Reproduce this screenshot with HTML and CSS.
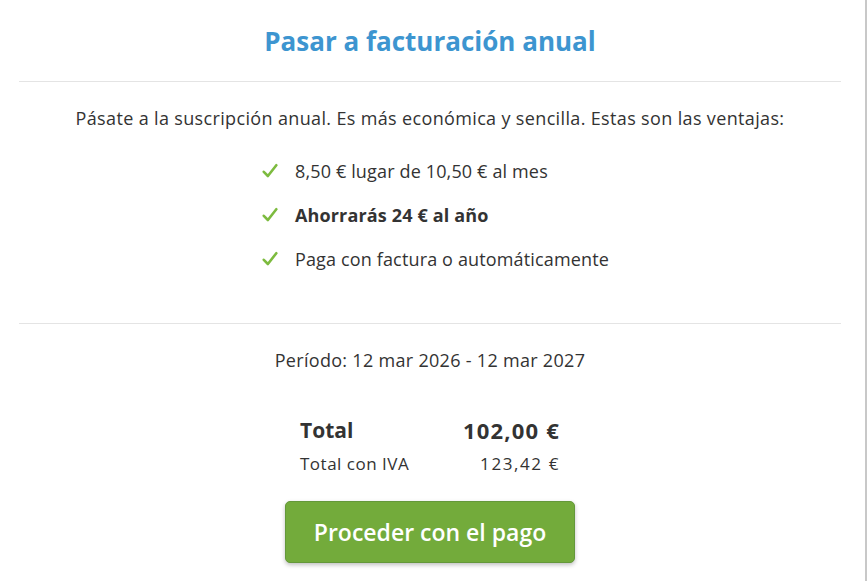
FILE: index.html
```html
<!DOCTYPE html>
<html lang="es">
<head>
  <meta charset="UTF-8">
  <meta name="viewport" content="width=device-width, initial-scale=1.0">
  <title>Pasar a facturación anual</title>
  <link rel="stylesheet" href="styles.css">
</head>
<body>
  <div class="modal">
    <div class="modal-header">
      <h1>Pasar a facturación anual</h1>
    </div>
    <div class="modal-section">
      <p class="intro">Pásate a la suscripción anual. Es más económica y sencilla. Estas son las ventajas:</p>
      <ul class="benefits">
        <li>
          <svg class="check" viewBox="0 0 16 16" width="16" height="16"><path d="M1.8 8.8 L5.9 13 L14.3 2.2" fill="none" stroke="#7dbb3f" stroke-width="2.6" stroke-linecap="round" stroke-linejoin="round"/></svg>
          <span>8,50 € lugar de 10,50 € al mes</span>
        </li>
        <li>
          <svg class="check" viewBox="0 0 16 16" width="16" height="16"><path d="M1.8 8.8 L5.9 13 L14.3 2.2" fill="none" stroke="#7dbb3f" stroke-width="2.6" stroke-linecap="round" stroke-linejoin="round"/></svg>
          <strong>Ahorrarás 24 € al año</strong>
        </li>
        <li>
          <svg class="check" viewBox="0 0 16 16" width="16" height="16"><path d="M1.8 8.8 L5.9 13 L14.3 2.2" fill="none" stroke="#7dbb3f" stroke-width="2.6" stroke-linecap="round" stroke-linejoin="round"/></svg>
          <span>Paga con factura o automáticamente</span>
        </li>
      </ul>
    </div>
    <div class="modal-footer">
      <p class="period">Período: 12 mar 2026 - 12 mar 2027</p>
      <table class="totals">
        <tr class="total-row">
          <td>Total</td>
          <td class="amount">102,00 €</td>
        </tr>
        <tr class="vat-row">
          <td>Total con IVA</td>
          <td class="amount">123,42 €</td>
        </tr>
      </table>
      <button class="pay-btn" type="button">Proceder con el pago</button>
    </div>
  </div>
</body>
</html>
```

FILE: styles.css
```css
html, body {
  margin: 0;
  padding: 0;
  background: #ffffff;
}
body {
  font-family: 'Open Sans', 'Lato', sans-serif;
  color: #333333;
}
.modal {
  box-sizing: border-box;
  width: 867px;
  height: 581px;
  padding: 0 24px 0 19px;
  border-right: 2px solid #c8c8c8;
}
.modal-header {
  height: 81px;
  border-bottom: 1px solid #e4e4e4;
  display: flex;
  align-items: center;
  justify-content: center;
}
h1 {
  margin: 0;
  font-size: 26px;
  font-weight: 700;
  color: #3d95d0;
}
.modal-section {
  height: 241px;
  border-bottom: 1px solid #e4e4e4;
  display: flex;
  flex-direction: column;
  align-items: center;
}
.intro {
  margin: 24px 0 0;
  font-size: 18px;
  line-height: 24px;
  letter-spacing: 0.35px;
}
.benefits {
  list-style: none;
  margin: 19px 0 0 11px;
  padding: 0;
}
.benefits li {
  display: flex;
  align-items: center;
  gap: 17px;
  height: 44px;
  font-size: 18px;
  letter-spacing: 0.15px;
}
.check {
  flex: none;
}
.modal-footer {
  display: flex;
  flex-direction: column;
  align-items: center;
}
.period {
  margin: 24px 0 0;
  font-size: 18px;
  line-height: 24px;
  letter-spacing: 0.3px;
}
.totals {
  width: 260px;
  border-collapse: collapse;
  margin-top: 43px;
}
.totals td {
  padding: 0;
}
.totals .amount {
  text-align: right;
}
.total-row td {
  font-size: 21px;
  font-weight: 700;
  height: 30px;
}
.total-row .amount {
  font-size: 22px;
  letter-spacing: 1.2px;
}
.vat-row td {
  font-size: 17px;
  height: 36px;
  letter-spacing: 0.5px;
}
.vat-row .amount {
  letter-spacing: 1.6px;
}
.pay-btn {
  margin-top: 20px;
  width: 290px;
  height: 62px;
  background: #73ab3b;
  color: #ffffff;
  border: 1px solid #64983a;
  border-radius: 5px;
  font-family: inherit;
  font-size: 23px;
  font-weight: 600;
  box-shadow: 0 2px 4px rgba(0, 0, 0, 0.25);
  cursor: pointer;
}
```
